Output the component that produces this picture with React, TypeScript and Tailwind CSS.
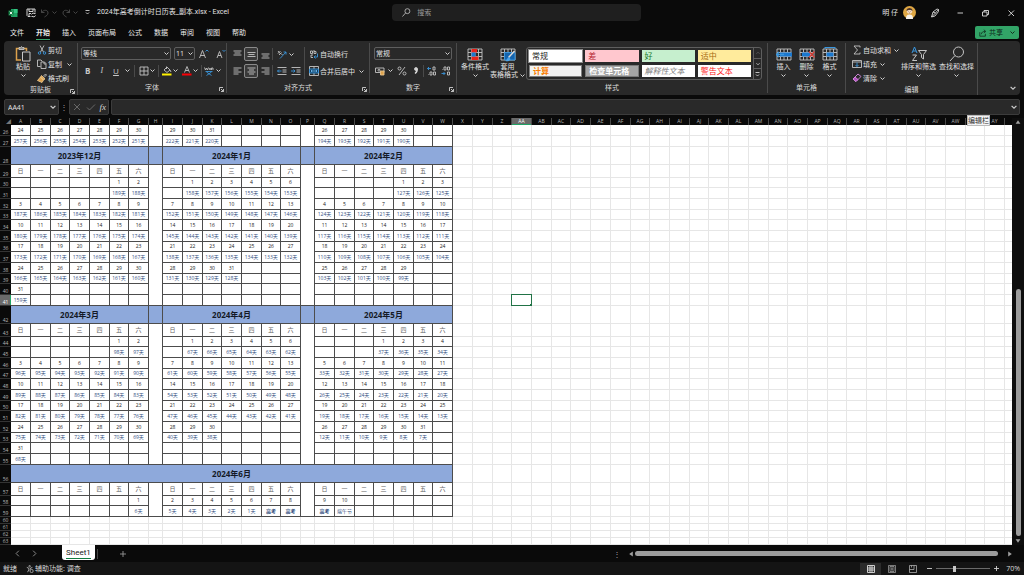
import React from "react";
import clsx from "clsx";

const EXAM_DAY = Date.UTC(2024, 5, 7);
const DAY_MS = 24 * 60 * 60 * 1000;
const WEEKDAYS = ["日", "一", "二", "三", "四", "五", "六"];
const MENUS = ["文件", "开始", "插入", "页面布局", "公式", "数据", "审阅", "视图", "帮助"];
const COL_WIDTHS = ["w-5", "w-5", "w-[19px]", "w-5", "w-5", "w-[19px]", "w-5"];
const ROW_HEIGHTS = ["h-[10px]", "h-[11px]", "h-[11px]"];
const EXTRA_COLS = 29;

type Kind = "title" | "weekday" | "date" | "count" | "empty";

interface ISheetRow {
  no: number;
  kind: Kind;
  height: string;
  blocks: string[][];
}

const columnName = (i: number): string =>
  i < 26
    ? String.fromCharCode(65 + i)
    : columnName(Math.floor(i / 26) - 1) + String.fromCharCode(65 + (i % 26));

const countdown = (year: number, month: number, day: number) => {
  const left = Math.round((EXAM_DAY - Date.UTC(year, month - 1, day)) / DAY_MS);
  if (left > 0) return `${left}天`;
  return day === 10 ? "端午节" : "高考";
};

// one week of a month: the dates and the countdown texts below them
const getWeek = (year: number, month: number, week: number, last?: number) => {
  const first = new Date(Date.UTC(year, month - 1, 1)).getUTCDay();
  const length = last ?? new Date(Date.UTC(year, month, 0)).getUTCDate();
  const days = WEEKDAYS.map((_, i) => week * 7 + i - first + 1);
  const valid = (d: number) => d > 0 && d <= length;
  return {
    dates: days.map((d) => (valid(d) ? String(d) : "")),
    counts: days.map((d) => (valid(d) ? countdown(year, month, d) : "")),
  };
};

const buildRows = (): ISheetRow[] => {
  const rows: ISheetRow[] = [];
  let no = 26;
  const add = (kind: Kind, height: string, blocks: string[][]) => {
    rows.push({ no, kind, height, blocks });
    no += 1;
  };
  const addWeek = (weeks: ReturnType<typeof getWeek>[], h1: string, h2: string) => {
    add("date", h1, weeks.map((w) => w.dates));
    add("count", h2, weeks.map((w) => w.counts));
  };

  addWeek([getWeek(2023, 9, 4), getWeek(2023, 10, 4), getWeek(2023, 11, 4)], "h-[11px]", "h-[11px]");

  const quarters = [
    [[2023, 12], [2024, 1], [2024, 2]],
    [[2024, 3], [2024, 4], [2024, 5]],
  ];
  quarters.forEach((months) => {
    add("title", "h-[18px]", months.map(([y, m]) => [`${y}年${m}月`]));
    add("weekday", "h-[13px]", months.map(() => WEEKDAYS));
    for (let w = 0; w < 6; w += 1) {
      addWeek(
        months.map(([y, m]) => getWeek(y, m, w)),
        ROW_HEIGHTS[(w * 2) % 3],
        ROW_HEIGHTS[(w * 2 + 1) % 3],
      );
    }
  });

  add("title", "h-[18px]", [["2024年6月"]]);
  add("weekday", "h-[13px]", [WEEKDAYS, WEEKDAYS, WEEKDAYS]);
  addWeek([0, 1, 2].map((w) => getWeek(2024, 6, w, 10)), "h-[10px]", "h-[11px]");
  for (let i = 0; i < 5; i += 1) add("empty", "h-[7px]", []);
  return rows;
};

const ROWS = buildRows();

/* ---------- icons ---------- */

interface IIcon {
  className?: string;
  box?: string;
  children: React.ReactNode;
}

const Icon = ({ className = "size-[10px]", box = "0 0 20 20", children }: IIcon) => (
  <svg
    viewBox={box}
    className={clsx("shrink-0", className)}
    fill="none"
    stroke="#c4c4c4"
    strokeWidth="1.8"
    aria-hidden="true"
  >
    {children}
  </svg>
);

const Chevron = ({ className = "w-[5px] h-[5px]" }: { className?: string }) => (
  <Icon className={className} box="0 0 10 10">
    <path d="M1 3l4 4 4-4" stroke="#d0d0d0" strokeWidth="2" />
  </Icon>
);

const Launcher = () => (
  <Icon className="size-[5px]" box="0 0 10 10">
    <path d="M1 8V1h7M4 4l5 5M9 4v5H4" stroke="#d0d0d0" />
  </Icon>
);

const Lines = ({ rows }: { rows: [number, number, number][] }) => (
  <Icon className="size-[9px]" box="0 0 18 18">
    {rows.map(([x, y, w]) => (
      <path key={y} d={`M${x} ${y}h${w}`} stroke="#c4c4c4" />
    ))}
  </Icon>
);

const GridIcon = ({ children }: { children?: React.ReactNode }) => (
  <Icon className="w-4 h-[15px]" box="0 0 32 30">
    <path d="M2 4h28v22H2zM2 11h28M2 19h28M9 4v22M16 4v22M23 4v22" strokeWidth="1.8" />
    {children}
  </Icon>
);

/* ---------- title bar ---------- */

const TitleBar = () => (
  <header className="relative flex h-[25px] shrink-0 items-center pl-2 pr-1">
    <Icon className="size-[10px]">
      <path d="M6 2h13v16H6z" fill="#21a366" stroke="none" />
      <path d="M12 2h7v8h-7z" fill="#33c481" stroke="none" />
      <path d="M1 5h10v10H1z" fill="#107c41" stroke="none" />
      <path d="M3.500 7.500l5 5M8.500 7.500l-5 5" stroke="#fff" />
    </Icon>
    <button aria-label="保存" className="ml-2">
      <Icon>
        <path d="M9 17H4l-2-2V2h16v7M6 2v5h8V2M6 17v-6h4" stroke="#e8e8e8" />
        <path d="M11 13a4 4 0 017-1v-2M19 15a4 4 0 01-7 1v2" stroke="#e8e8e8" />
      </Icon>
    </button>
    <button aria-label="撤消" className="ml-1 flex items-center gap-[2px]">
      <Icon>
        <path d="M3 3v6h6M3 9c4-6 13-6 13 1 0 4-4 6-7 8" stroke="#4c4c4c" />
      </Icon>
      <Icon className="size-[5px]" box="0 0 10 10">
        <path d="M1 3l4 4 4-4" stroke="#4c4c4c" />
      </Icon>
    </button>
    <button aria-label="恢复" className="ml-1 flex items-center gap-[2px]">
      <Icon>
        <path d="M17 3v6h-6M17 9C13 3 4 3 4 10c0 4 4 6 7 8" stroke="#4c4c4c" />
      </Icon>
      <Icon className="size-[5px]" box="0 0 10 10">
        <path d="M1 3l4 4 4-4" stroke="#4c4c4c" />
      </Icon>
    </button>
    <button aria-label="自定义快速访问工具栏" className="ml-[7px]">
      <Icon className="size-[5px]" box="0 0 10 10">
        <path d="M1 1h8M2 5l3 3 3-3" stroke="#d0d0d0" />
      </Icon>
    </button>
    <h1 className="ml-[7px] font-[Roboto,'Noto_Sans_CJK_SC',sans-serif] text-[7px] text-[#e4e4e4]">
      2024年高考倒计时日历表_副本.xlsx - Excel
    </h1>

    <label className="absolute left-[38.3%] top-1 flex h-[17px] w-[24.3%] items-center gap-[6px] rounded-sm bg-[#1f1f1f] pl-[10px]">
      <Icon className="size-[9px]">
        <circle cx="12" cy="7" r="5.500" />
        <path d="M8 11l-7 8" />
      </Icon>
      <input
        type="text"
        aria-label="搜索"
        placeholder="搜索"
        className="min-w-0 flex-1 bg-transparent text-[7px] outline-none placeholder:text-[#9a9a9a]"
      />
    </label>

    <div className="ml-auto flex items-center">
      <span className="text-[7px] text-[#e4e4e4]">明 仔</span>
      <svg viewBox="0 0 26 26" className="ml-[5px] size-[13px]" aria-hidden="true">
        <circle cx="13" cy="13" r="13" fill="#dfa743" />
        <path d="M6 26c0-8 4-9 7-9s7 1 7 9z" fill="#f6f1ea" />
        <circle cx="13" cy="10" r="5.500" fill="#f3d9bf" />
        <path d="M7 10c-1-8 13-8 12 0-2-3-9-3-12 0z" fill="#4d3425" />
        <path d="M10 11h1M15 11h1M12 14h2" stroke="#5d3b2b" />
      </svg>
      <button aria-label="墨迹" className="ml-[14px]">
        <Icon>
          <path d="M3 18L6 8l8-6 3 1v4l-7 9zM6 8l5 2 6-7M3 18l8-8" stroke="#d8d8d8" />
        </Icon>
      </button>
      <button aria-label="最小化" className="ml-[15px]">
        <Icon>
          <path d="M5 10h11" stroke="#e0e0e0" />
        </Icon>
      </button>
      <button aria-label="还原" className="ml-[15px]">
        <Icon>
          <path d="M5 8h9v8H5zM8 8V5h9v8h-3" stroke="#e0e0e0" />
        </Icon>
      </button>
      <button aria-label="关闭" className="ml-4 mr-1">
        <Icon>
          <path d="M5 5l11 11M16 5L5 16" stroke="#e0e0e0" />
        </Icon>
      </button>
    </div>
  </header>
);

const MenuBar = () => (
  <nav className="flex h-4 shrink-0 items-center pl-[10px] pr-[5px]">
    {MENUS.map((menu) => (
      <a
        key={menu}
        href="#"
        className={clsx(
          "mr-3 border-b pb-px text-[7px] leading-[11px] text-[#eaeaea]",
          menu === "开始" ? "border-[#3aa76d] font-bold" : "border-transparent",
        )}
      >
        {menu}
      </a>
    ))}
    <button className="ml-auto mb-px flex h-[13px] items-center gap-[2px] rounded-[2px] bg-[#32a467] px-1 text-[7px] text-[#0d2418]">
      <Icon className="size-[8px]">
        <path d="M2 8v10h14v-6M6 13c0-5 4-7 9-7M12 2l5 4-5 4" stroke="#0d2418" />
      </Icon>
      共享
      <Icon className="ml-[5px] size-[5px]" box="0 0 10 10">
        <path d="M1 3l4 4 4-4" stroke="#0d2418" />
      </Icon>
    </button>
  </nav>
);

/* ---------- ribbon ---------- */

interface IGroup {
  title: string;
  width: string;
  launcher?: boolean;
  children: React.ReactNode;
}

const Group = ({ title, width, launcher, children }: IGroup) => (
  <section className={clsx("flex shrink-0 flex-col", width)}>
    <div className="my-[2px] flex flex-1 flex-col border-r border-[#4a4a4a]">
      <div className="flex flex-1 items-start">{children}</div>
      <div className="relative text-center text-[7px] leading-[10px] text-[#dadada]">
        {title}
        {launcher && (
          <button aria-label={`${title}设置`} className="absolute bottom-px right-[2px]">
            <Launcher />
          </button>
        )}
      </div>
    </div>
  </section>
);

interface IBigButton {
  icon: React.ReactNode;
  text: string;
  text2?: string;
}

const BigButton = ({ icon, text, text2 }: IBigButton) => (
  <button className="flex shrink-0 flex-col items-center whitespace-nowrap pt-[2px] text-[7px] leading-2 text-[#e0e0e0]">
    <span className="flex h-[18px] items-center">{icon}</span>
    <span>{text}</span>
    <span className="flex h-2 items-center gap-[2px]">
      {text2}
      <Chevron />
    </span>
  </button>
);

interface ISmallButton {
  icon: React.ReactNode;
  text: string;
  arrow?: string;
}

const SmallButton = ({ icon, text, arrow }: ISmallButton) => (
  <button className="flex h-[14px] items-center whitespace-nowrap text-[7px] text-[#e0e0e0]">
    {icon}
    <span className="ml-px">{text}</span>
    {arrow && <Chevron className={clsx("size-[5px]", arrow)} />}
  </button>
);

const Divider = () => <i className="h-3 w-px bg-[#4a4a4a]" />;

const SelectBox = ({ label, value, width }: { label: string; value: string; width: string }) => (
  <div className={clsx("relative h-[13px]", width)}>
    <select
      aria-label={label}
      className="block h-full w-full appearance-none rounded-[2px] border border-[#5e5e5e] bg-[#292929] pl-px text-[7px] leading-[11px] text-[#e4e4e4]"
    >
      <option>{value}</option>
    </select>
    <Chevron className="pointer-events-none absolute right-[2px] top-1 size-[5px]" />
  </div>
);

const Clipboard = () => (
  <Group title="剪贴板" width="w-[74px]" launcher>
    <div className="ml-[11px]">
      <BigButton
        text="粘贴"
        icon={
          <Icon className="size-4" box="0 0 32 32">
            <path d="M12 28H3V5h20v5" stroke="#dda24c" strokeWidth="3" />
            <path d="M8 7V3h3l2-2 2 2h3v4z" fill="#8a8a8a" />
            <path d="M15 12h15v18H15z" fill="#292929" stroke="#c8c8c8" strokeWidth="2" />
          </Icon>
        }
      />
    </div>
    <div className="ml-[6px]">
      <SmallButton
        text="剪切"
        icon={
          <Icon>
            <path d="M6 1l7 13M14 1L7 14" />
            <circle cx="5" cy="16" r="2.500" stroke="#3a96dd" />
            <circle cx="15" cy="16" r="2.500" stroke="#3a96dd" />
          </Icon>
        }
      />
      <SmallButton
        text="复制"
        arrow="ml-[5px]"
        icon={
          <Icon>
            <path d="M7 15H1V2h7l3 3M8 6h7l3 3v10H8zM14 6v4h4" />
          </Icon>
        }
      />
      <SmallButton
        text="格式刷"
        icon={
          <Icon>
            <path d="M12 7l5-5 2 2-5 5" />
            <path d="M9 5l7 7-3 2-6-6zM7 8l6 6-3 5-9-4z" fill="#dda24c" stroke="#e8c48c" />
          </Icon>
        }
      />
    </div>
  </Group>
);

const FontGroup = () => (
  <Group title="字体" width="w-[149px]" launcher>
    <div className="flex flex-col gap-1 pl-[3px] pt-1">
      <div className="flex items-center gap-[3px]">
        <SelectBox label="字体" value="等线" width="w-[90px]" />
        <SelectBox label="字号" value="11" width="w-[21px]" />
        <button aria-label="增大字号" className="ml-px">
          <Icon>
            <path d="M1 18L7 3l6 15M3 13h8" />
            <path d="M13 5l3-3 3 3" stroke="#3a96dd" />
          </Icon>
        </button>
        <button aria-label="减小字号" className="ml-1">
          <Icon>
            <path d="M2 18L7 5l5 13M4 13h6" />
            <path d="M13 2l3 3 3-3" stroke="#3a96dd" />
          </Icon>
        </button>
      </div>
      <div className="flex h-[13px] items-center text-[8px] text-[#c8c8c8]">
        <button className="ml-1 font-bold">B</button>
        <button className="ml-[10px] font-['Liberation_Serif',serif] italic">I</button>
        <button className="ml-[10px] underline">U</button>
        <Chevron className="ml-[6px] mr-1 size-[5px]" />
        <Divider />
        <button aria-label="边框" className="ml-1">
          <Icon>
            <path d="M2 2h16v16H2zM2 10h16M10 2v16" />
          </Icon>
        </button>
        <Chevron className="ml-px mr-[3px] size-[5px]" />
        <Divider />
        <button aria-label="填充颜色" className="ml-[3px]">
          <Icon>
            <path d="M4 8l6-6 6 6-6 5zM16 8l2 4M9 1v5" />
            <path d="M0 17h19" stroke="#fff200" strokeWidth="4" />
          </Icon>
        </button>
        <Chevron className="ml-px size-[5px]" />
        <button aria-label="字体颜色" className="ml-1">
          <Icon>
            <path d="M5 13l5-12 5 12M7 9h6" />
            <path d="M0 17h19" stroke="#fb0007" strokeWidth="4" />
          </Icon>
        </button>
        <Chevron className="ml-px mr-[3px] size-[5px]" />
        <Divider />
        <button aria-label="拼音" className="ml-[2px]">
          <Icon>
            <path d="M1 3l2 5 2-4 2 4 2-5M10 6h4M12 4v4M15 8V4h3v4" />
            <path d="M3 11h14M5 12l10 7M15 12L5 19" stroke="#3a96dd" />
          </Icon>
        </button>
        <Chevron className="ml-[2px] size-[5px]" />
      </div>
    </div>
  </Group>
);

const boxed = "flex size-[14px] items-center justify-center rounded-[2px]";

const Alignment = () => (
  <Group title="对齐方式" width="w-[143px]" launcher>
    <div className="flex w-full pl-[3px] pt-1">
      <div className="flex flex-col gap-[3px]">
        <div className="flex items-center">
          <button aria-label="顶端对齐" className={boxed}>
            <Lines rows={[[1, 2, 16], [3, 6, 12], [1, 10, 16]]} />
          </button>
          <button aria-label="垂直居中" className={clsx(boxed, "border border-[#8a8a8a] bg-[#3a3a3a]")}>
            <Lines rows={[[1, 5, 16], [3, 9, 12], [1, 13, 16]]} />
          </button>
          <button aria-label="底端对齐" className={boxed}>
            <Lines rows={[[1, 8, 16], [3, 12, 12], [1, 16, 16]]} />
          </button>
          <Divider />
          <button aria-label="方向" className="ml-1 flex items-center gap-[2px]">
            <Icon>
              <path d="M2 9l5-5M4 12l5-5M2 4l4 5M8 9l3 3" />
              <path d="M6 19L18 6M18 11V6h-5" stroke="#3a96dd" />
            </Icon>
            <Chevron />
          </button>
        </div>
        <div className="flex items-center">
          <button aria-label="左对齐" className={boxed}>
            <Lines rows={[[1, 2, 16], [1, 6, 10], [1, 10, 16], [1, 14, 10]]} />
          </button>
          <button aria-label="居中" className={clsx(boxed, "border border-[#8a8a8a] bg-[#3a3a3a]")}>
            <Lines rows={[[1, 2, 16], [4, 6, 10], [1, 10, 16], [4, 14, 10]]} />
          </button>
          <button aria-label="右对齐" className={boxed}>
            <Lines rows={[[1, 2, 16], [7, 6, 10], [1, 10, 16], [7, 14, 10]]} />
          </button>
          <Divider />
          <button aria-label="减少缩进量" className="ml-1">
            <Icon>
              <path d="M1 3h18M11 8h8M11 12h8M1 17h18" />
              <path d="M9 10H1M4 7l-3 3 3 3" stroke="#3a96dd" />
            </Icon>
          </button>
          <button aria-label="增加缩进量" className="ml-1">
            <Icon>
              <path d="M1 3h18M11 8h8M11 12h8M1 17h18" />
              <path d="M0 10h8M5 7l3 3-3 3" stroke="#3a96dd" />
            </Icon>
          </button>
        </div>
      </div>
      <i className="ml-[3px] h-8 w-px bg-[#4a4a4a]" />
      <div className="flex flex-col gap-[3px] pl-1">
        <SmallButton
          text="自动换行"
          icon={
            <Icon>
              <path d="M3 4h4v5H3zM10 2v7h4V5h-4M8 12H4v5h4" />
              <path d="M11 16h6V9M13 13l-3 3 3 3" stroke="#3a96dd" />
            </Icon>
          }
        />
        <SmallButton
          text="合并后居中"
          arrow="ml-1"
          icon={
            <Icon>
              <path d="M1 1h18v18H1zM10 1v5M10 14v5" />
              <path d="M1 6h18v8H1z" fill="#123c5c" stroke="#3a96dd" />
              <path d="M4 10h12M6 8l-2 2 2 2M14 8l2 2-2 2" stroke="#6bb7ee" />
            </Icon>
          }
        />
      </div>
    </div>
  </Group>
);

const NumberGroup = () => (
  <Group title="数字" width="w-[87px]" launcher>
    <div className="flex flex-col gap-1 pl-1 pt-1">
      <SelectBox label="数字格式" value="常规" width="w-[78px]" />
      <div className="flex h-[13px] items-center">
        <button aria-label="会计数字格式" className="ml-px flex items-center gap-[3px]">
          <Icon>
            <path d="M1 4h17v9H1z" />
            <circle cx="8" cy="8.500" r="2" />
            <path d="M11 10h7v8h-7z" fill="#dda24c" stroke="#e8c48c" />
          </Icon>
          <Chevron />
        </button>
        <button aria-label="百分比样式" className="ml-1">
          <Icon>
            <circle cx="5" cy="5" r="3" />
            <circle cx="15" cy="15" r="3" />
            <path d="M16 2L4 18" />
          </Icon>
        </button>
        <button aria-label="千位分隔样式" className="ml-1 mr-[2px]">
          <Icon>
            <circle cx="10" cy="6" r="3" fill="#d8d8d8" />
            <path d="M12 6c1 5-1 7-4 9" strokeWidth="3" stroke="#d8d8d8" />
          </Icon>
        </button>
        <Divider />
        <button aria-label="增加小数位数" className="ml-[3px]">
          <Icon>
            <path d="M8 5H1M4 2L1 5l3 3" stroke="#3a96dd" />
            <path d="M12 2h4v6h-4zM6 12h4v6H6zM13 12h4v6h-4zM2 17h1" />
          </Icon>
        </button>
        <button aria-label="减少小数位数" className="ml-1">
          <Icon>
            <path d="M1 15h7M5 12l3 3-3 3" stroke="#3a96dd" />
            <path d="M6 2h4v6H6zM13 2h4v6h-4zM13 12h4v6h-4zM2 7h1" />
          </Icon>
        </button>
      </div>
    </div>
  </Group>
);

const STYLES = [
  ["常规", "bg-white text-[#222] outline outline-[#8a8a8a]"],
  ["差", "bg-[#ffc7ce] text-[#b3202c]"],
  ["好", "bg-[#c6efce] text-[#1f7a2c]"],
  ["适中", "bg-[#ffeb9c] text-[#a86a12]"],
  ["计算", "bg-[#f2f2f2] text-[#fa7d00] font-bold border border-[#7f7f7f]"],
  ["检查单元格", "bg-[#a5a5a5] text-white font-bold border border-[#7a7a7a]"],
  ["解释性文本", "bg-white text-[#7f7f7f] italic"],
  ["警告文本", "bg-white text-[#ff2020]"],
];

const StylesGroup = () => (
  <Group title="样式" width="w-[311px]">
    <div className="ml-1">
      <BigButton
        text="条件格式"
        icon={
          <GridIcon>
            <path d="M9 4h11v7H9zM9 19h14v7H9z" fill="#e8231a" stroke="none" />
            <path d="M9 11h8v8H9z" fill="#1a78cf" stroke="none" />
          </GridIcon>
        }
      />
    </div>
    <div className="ml-px">
      <BigButton
        text="套用"
        text2="表格格式"
        icon={
          <GridIcon>
            <path d="M9 11h21v15H9z" fill="#1464ad" stroke="#3a96dd" />
            <path d="M29 8L17 21" stroke="#d8d8d8" strokeWidth="3" />
            <path d="M17 20l4 4c-2 5-6 5-10 4 3-2 3-6 6-8z" fill="#4aa5ec" stroke="none" />
          </GridIcon>
        }
      />
    </div>
    <div className="ml-px mr-[5px] mt-1 flex h-[33px] flex-1 overflow-hidden rounded-[3px] border border-[#5e5e5e]">
      <div className="grid flex-1 grid-cols-4 grid-rows-2 gap-[3px] p-[2px]">
        {STYLES.map(([name, style]) => (
          <button
            key={name}
            className={clsx("flex items-center overflow-hidden whitespace-nowrap pl-[3px] text-[8px] leading-[10px]", style)}
          >
            {name}
          </button>
        ))}
      </div>
      <div className="flex w-2 flex-col divide-y divide-[#5e5e5e] border-l border-[#5e5e5e]">
        <button aria-label="上一行" className="flex flex-1 items-center justify-center">
          <Icon className="size-1" box="0 0 10 10">
            <path d="M1 7l4-4 4 4" stroke="#666" />
          </Icon>
        </button>
        <button aria-label="下一行" className="flex flex-1 items-center justify-center">
          <Chevron className="size-1" />
        </button>
        <button aria-label="其他样式" className="flex flex-1 items-center justify-center">
          <Icon className="size-[5px]" box="0 0 10 10">
            <path d="M1 1h8M2 5l3 3 3-3" stroke="#d0d0d0" />
          </Icon>
        </button>
      </div>
    </div>
  </Group>
);

const CellsGroup = () => (
  <Group title="单元格" width="w-[78px]">
    <div className="flex flex-1 justify-around px-1">
      <BigButton
        text="插入"
        icon={
          <GridIcon>
            <path d="M8 11h24v8H8z" fill="#1a78cf" stroke="none" />
            <path d="M16 15H1M6 10l-5 5 5 5" stroke="#3a96dd" strokeWidth="3" />
          </GridIcon>
        }
      />
      <BigButton
        text="删除"
        icon={
          <GridIcon>
            <path d="M6 11h16v8H6z" fill="#1a78cf" stroke="none" />
            <path d="M20 9l11 12M31 9L20 21" stroke="#d8413a" strokeWidth="2.500" />
          </GridIcon>
        }
      />
      <BigButton
        text="格式"
        icon={
          <GridIcon>
            <path d="M9 11h14v8H9z" fill="#1a78cf" stroke="none" />
            <path d="M6 1h20M6 -2v6M26 -2v6" stroke="#3a96dd" strokeWidth="2" />
          </GridIcon>
        }
      />
    </div>
  </Group>
);

const EditingGroup = () => (
  <Group title="编辑" width="w-[132px]">
    <div className="ml-[6px]">
      <SmallButton
        text="自动求和"
        arrow="ml-[3px]"
        icon={
          <Icon>
            <path d="M16 5V2H4l7 8-7 8h12v-3" />
          </Icon>
        }
      />
      <SmallButton
        text="填充"
        arrow="ml-[3px]"
        icon={
          <Icon>
            <path d="M1 3h18v14H1zM1 6h18" />
            <path d="M10 7v8M7 12l3 3 3-3" stroke="#3a96dd" />
          </Icon>
        }
      />
      <SmallButton
        text="清除"
        arrow="ml-[3px]"
        icon={
          <Icon>
            <path d="M2 12L12 2l6 5L8 17z" stroke="#d78be0" />
            <path d="M2 12l4-4 6 5-4 4z" fill="#b14fc0" stroke="#d78be0" />
          </Icon>
        }
      />
    </div>
    <div className="ml-[2px] flex gap-[3px]">
      <BigButton
        text="排序和筛选"
        icon={
          <Icon className="size-4" box="0 0 32 32">
            <path d="M2 14L7 2l5 12M4 10h6" stroke="#3a96dd" strokeWidth="2" />
            <path d="M3 18h8L3 29h9" strokeWidth="2" />
            <path d="M15 9h16l-6 8v9l-4-3v-6z" strokeWidth="2" />
          </Icon>
        }
      />
      <BigButton
        text="查找和选择"
        icon={
          <Icon className="size-4" box="0 0 32 32">
            <circle cx="19" cy="12" r="10" strokeWidth="2" />
            <path d="M12 19L2 30" strokeWidth="2" />
          </Icon>
        }
      />
    </div>
  </Group>
);

const Ribbon = () => (
  <div className="mx-1 flex h-[54px] shrink-0 overflow-hidden rounded-[4px] bg-[#292929]">
    <Clipboard />
    <FontGroup />
    <Alignment />
    <NumberGroup />
    <StylesGroup />
    <CellsGroup />
    <EditingGroup />
    <button aria-label="折叠功能区" className="ml-auto mr-1 self-end pb-1">
      <Chevron className="size-[6px]" />
    </button>
  </div>
);

const FormulaBar = () => (
  <div className="mx-1 mt-1 flex h-4 shrink-0 items-center">
    <div className="relative h-full w-[55px]">
      <input
        aria-label="名称框"
        defaultValue="AA41"
        className="block h-full w-full rounded-[2px] border border-[#3c3c3c] bg-[#292929] pl-[3px] text-[7px] text-[#e4e4e4]"
      />
      <Chevron className="pointer-events-none absolute right-[3px] top-[5px] size-[6px]" />
    </div>
    <span className="w-[10px] text-center text-[8px] leading-none text-[#9a9a9a]">⋮</span>
    <div className="flex h-full w-10 items-center justify-around rounded-[2px] border border-[#3c3c3c] bg-[#292929]">
      <button aria-label="取消">
        <Icon>
          <path d="M4 4l12 12M16 4L4 16" stroke="#6e6e6e" />
        </Icon>
      </button>
      <button aria-label="输入">
        <Icon>
          <path d="M2 11l5 5L18 5" stroke="#6e6e6e" />
        </Icon>
      </button>
      <button className="font-['Liberation_Serif',serif] text-[9px] italic leading-none text-[#d8d8d8]">fx</button>
    </div>
    <div className="relative ml-[2px] h-full flex-1">
      <input
        aria-label="公式"
        className="block h-full w-full rounded-[2px] border border-[#3c3c3c] bg-[#292929] pl-1 text-[7px] text-[#e4e4e4]"
      />
      <Chevron className="pointer-events-none absolute right-[3px] top-[5px] size-[6px]" />
    </div>
  </div>
);

/* ---------- sheet ---------- */

const dark = "border-[#4c4c4c]";
const light = "border-[#e6e6e6]";

const textStyle: Record<Kind, string> = {
  title: "",
  weekday: "text-[6px] text-[#666]",
  date: "text-[5px] text-[#222]",
  count: "text-[5px] text-[#34507f]",
  empty: "",
};

const CalendarCells = ({ row, last }: { row: ISheetRow; last: boolean }) => {
  if (row.kind === "empty") {
    return (
      <>
        {Array.from({ length: 23 }, (_, i) => (
          <td key={i} className={clsx("border-b border-r", light)} />
        ))}
      </>
    );
  }

  if (row.kind === "title") {
    const single = row.blocks.length === 1;
    return (
      <>
        {row.blocks.map(([text], i) => (
          <React.Fragment key={text}>
            {i > 0 && <td className={clsx("border-b border-r bg-[#8ea9db]", dark)} />}
            <td
              colSpan={single ? 23 : 7}
              className={clsx("border-b border-r bg-[#8ea9db] text-[8px] font-bold text-[#151a26]", dark)}
            >
              {text}
            </td>
          </React.Fragment>
        ))}
      </>
    );
  }

  return (
    <>
      {row.blocks.map((block, i) => (
        <React.Fragment key={i}>
          {i > 0 && <td className={clsx("border-r bg-white", dark, last && "border-b")} />}
          {block.map((text, j) => (
            <td
              key={j}
              className={clsx(
                "whitespace-nowrap border-b border-r",
                dark,
                textStyle[row.kind],
                text === "高考" && "font-bold",
              )}
            >
              <span className="-mx-2">{text}</span>
            </td>
          ))}
        </React.Fragment>
      ))}
    </>
  );
};

const Sheet = () => (
  <div className="min-w-0 flex-1 overflow-hidden bg-white">
    <table className="w-max table-fixed border-separate border-spacing-0 text-center leading-[5px]">
      <colgroup>
        <col className="w-[11px]" />
        {[0, 1, 2].map((b) => (
          <React.Fragment key={b}>
            {b > 0 && <col className="w-[14px]" />}
            {COL_WIDTHS.map((w, i) => (
              <col key={i} className={w} />
            ))}
          </React.Fragment>
        ))}
        {Array.from({ length: EXTRA_COLS }, (_, i) => (
          <col key={i} className={COL_WIDTHS[i % 7]} />
        ))}
      </colgroup>
      <thead>
        <tr className="h-[7px] bg-[#0a0a0a] text-[5px] text-[#b5b5b5]">
          <th className="text-right font-normal text-[#777]">◢</th>
          {Array.from({ length: 22 + EXTRA_COLS }, (_, i) => {
            const name = columnName(i);
            return (
              <th
                key={name}
                className={clsx(
                  "border-r border-[#4a4a4a] font-normal",
                  name === "AA" && "bg-[#6a6a6a] text-white shadow-[inset_0_-1px_0_#21a366]",
                )}
              >
                {name}
              </th>
            );
          })}
          <th />
        </tr>
      </thead>
      <tbody>
        {ROWS.map((row, index) => {
          const next = ROWS[index + 1]?.kind;
          return (
            <tr key={row.no} className={row.height}>
              <th
                className={clsx(
                  "border-b border-[#333] align-bottom text-[5px] font-normal",
                  row.no === 41
                    ? "bg-[#6a6a6a] text-white shadow-[inset_-1px_0_0_#21a366]"
                    : "bg-[#0a0a0a] text-[#b5b5b5]",
                )}
              >
                {row.no}
              </th>
              <CalendarCells row={row} last={next === "title" || next === "empty"} />
              {Array.from({ length: EXTRA_COLS }, (_, i) => (
                <td key={i} className={clsx("relative border-b border-r", light)}>
                  {row.no === 41 && i === 3 && (
                    <span className="absolute -inset-px border border-[#217346] after:absolute after:-bottom-px after:-right-px after:size-[2px] after:bg-[#217346]" />
                  )}
                </td>
              ))}
            </tr>
          );
        })}
      </tbody>
    </table>
  </div>
);

const VerticalScroll = () => (
  <div className="flex w-3 shrink-0 flex-col items-center bg-[#0e0e0e] py-px">
    <button aria-label="向上滚动">
      <Icon className="size-[6px]" box="0 0 10 10">
        <path d="M1 8l4-6 4 6z" fill="#a0a0a0" stroke="none" />
      </Icon>
    </button>
    <div className="flex w-[5px] flex-1 flex-col">
      <div className="grow-[2]" />
      <div className="grow-[3] rounded-full bg-[#9c9c9c]" />
    </div>
    <button aria-label="向下滚动" className="mt-[2px]">
      <Icon className="size-[6px]" box="0 0 10 10">
        <path d="M1 2l4 6 4-6z" fill="#a0a0a0" stroke="none" />
      </Icon>
    </button>
  </div>
);

const SheetTabs = () => (
  <div className="flex h-[17px] shrink-0 items-center pl-[14px] pr-[11px]">
    <button aria-label="上一张工作表">
      <Icon className="size-[7px]" box="0 0 10 10">
        <path d="M7 1L3 5l4 4" stroke="#8a8a8a" strokeWidth="1.400" />
      </Icon>
    </button>
    <button aria-label="下一张工作表" className="ml-[10px]">
      <Icon className="size-[7px]" box="0 0 10 10">
        <path d="M3 1l4 4-4 4" stroke="#8a8a8a" strokeWidth="1.400" />
      </Icon>
    </button>
    <button className="ml-6 h-[15px] self-start rounded-b-[3px] bg-white px-1 font-[Roboto,sans-serif] text-[8px] leading-[11px] text-[#222]">
      <span className="block border-b border-[#107c41]">Sheet1</span>
    </button>
    <i className="ml-[2px] h-[10px] w-px bg-[#444]" />
    <button aria-label="新工作表" className="ml-[22px]">
      <Icon className="size-[6px]" box="0 0 10 10">
        <path d="M5 0v10M0 5h10" stroke="#a0a0a0" strokeWidth="1.400" />
      </Icon>
    </button>
    <div className="ml-auto flex w-2/5 items-center">
      <span className="w-2 text-center text-[8px] leading-none text-[#a0a0a0]">⋮</span>
      <button aria-label="向左滚动" className="ml-[7px]">
        <Icon className="size-[6px]" box="0 0 10 10">
          <path d="M8 1L2 5l6 4z" fill="#a0a0a0" stroke="none" />
        </Icon>
      </button>
      <div className="ml-px mr-[9px] h-[5px] flex-1 rounded-full bg-[#9c9c9c]" />
      <button aria-label="向右滚动">
        <Icon className="size-[6px]" box="0 0 10 10">
          <path d="M2 1l6 4-6 4z" fill="#a0a0a0" stroke="none" />
        </Icon>
      </button>
    </div>
  </div>
);

const StatusBar = () => (
  <footer className="flex h-[13px] shrink-0 items-center bg-[#141414] pl-[3px] pr-1 text-[7px] text-[#d8d8d8]">
    <span>就绪</span>
    <button className="ml-[9px] flex items-center gap-px">
      <Icon className="size-2">
        <circle cx="9" cy="3" r="2" />
        <path d="M2 6l5 2v4l-3 6M16 6l-5 2v3M9 12l-1 1" stroke="#d8d8d8" />
        <circle cx="14" cy="15" r="4" />
      </Icon>
      辅助功能: 调查
    </button>
    <div className="ml-auto flex items-center">
      <button aria-label="普通" className="flex h-3 w-[21px] items-center justify-center bg-[#2b2b2b]">
        <Icon className="size-2" box="0 0 16 16">
          <path d="M1 1h14v14H1zM1 6h14M1 10h14M6 1v14M10 1v14" stroke="#e0e0e0" />
        </Icon>
      </button>
      <button aria-label="页面布局" className="flex w-[21px] justify-center">
        <Icon className="size-2" box="0 0 16 16">
          <path d="M1 1h14v14H1zM4 3h8v10H4zM6 6h4M6 8h4M6 10h4" stroke="#c0c0c0" strokeWidth="1.200" />
        </Icon>
      </button>
      <button aria-label="分页预览" className="flex w-[21px] justify-center">
        <Icon className="size-2" box="0 0 16 16">
          <path d="M1 1h14v14H1zM1 9h9V1M5 1v4" stroke="#c0c0c0" strokeWidth="1.400" />
        </Icon>
      </button>
      <button aria-label="缩小" className="ml-1">
        <Icon className="size-[5px]" box="0 0 10 10">
          <path d="M0 5h10" stroke="#d0d0d0" />
        </Icon>
      </button>
      <input
        type="range"
        aria-label="缩放"
        min={10}
        max={190}
        defaultValue={70}
        className="mx-1 h-[6px] w-[54px] appearance-none bg-[linear-gradient(#6a6a6a,#6a6a6a)] bg-[length:100%_1px] bg-center bg-no-repeat [&::-webkit-slider-thumb]:h-[6px] [&::-webkit-slider-thumb]:w-[3px] [&::-webkit-slider-thumb]:appearance-none [&::-webkit-slider-thumb]:bg-[#c8c8c8]"
      />
      <button aria-label="放大">
        <Icon className="size-[5px]" box="0 0 10 10">
          <path d="M0 5h10M5 0v10" stroke="#d0d0d0" />
        </Icon>
      </button>
      <span className="ml-[7px]">70%</span>
    </div>
  </footer>
);

const App = () => {
  return (
    <div className="flex h-screen flex-col overflow-hidden bg-[#0a0a0a] font-['Open_Sans','Noto_Sans_CJK_SC',sans-serif] leading-none">
      <TitleBar />
      <MenuBar />
      <Ribbon />
      <FormulaBar />
      <main className="relative mt-[3px] flex min-h-0 flex-1">
        <Sheet />
        <VerticalScroll />
        <div
          role="tooltip"
          className="absolute -top-[3px] right-[34px] border border-[#bbb] bg-[#f5f5f5] text-[7px] leading-[9px] text-[#333]"
        >
          编辑栏
        </div>
      </main>
      <SheetTabs />
      <StatusBar />
    </div>
  );
};

export default App;
